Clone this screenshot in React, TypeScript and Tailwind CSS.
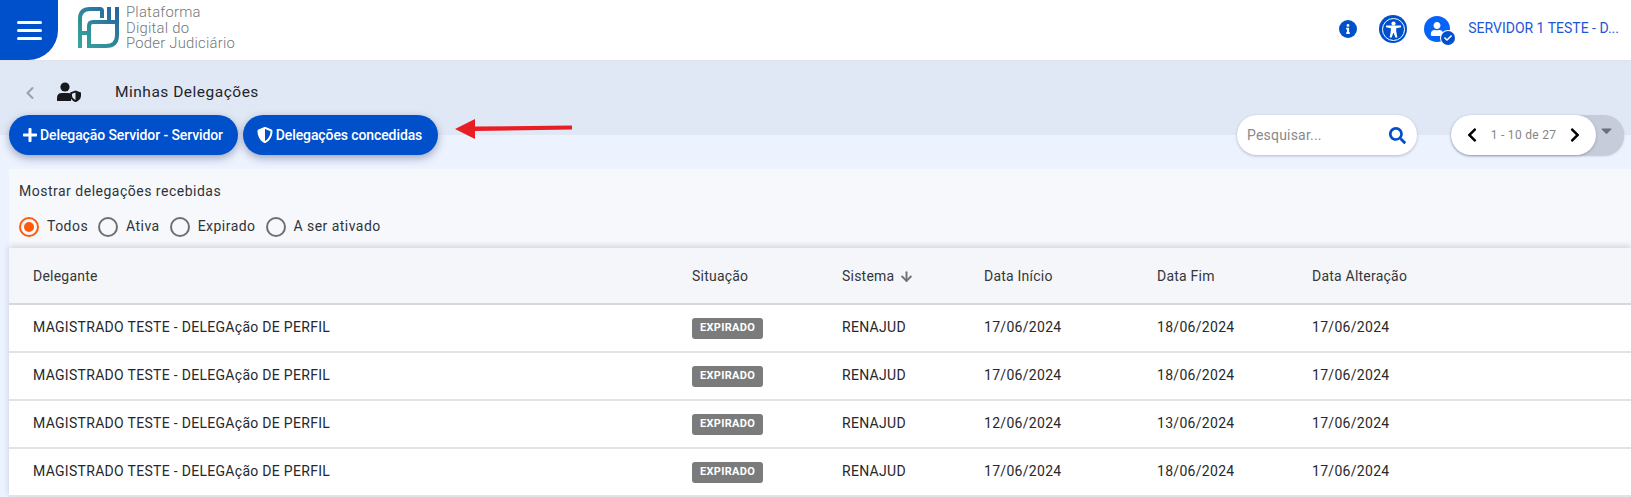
import { ArrowDown, ChevronLeft } from 'lucide-react'
import { FaCaretDown, FaCheck, FaChevronLeft, FaChevronRight, FaInfo, FaPlus, FaSearch, FaShieldAlt, FaUser } from 'react-icons/fa'

const rows = [
  { start: '17/06/2024', end: '18/06/2024', changed: '17/06/2024' },
  { start: '17/06/2024', end: '18/06/2024', changed: '17/06/2024' },
  { start: '12/06/2024', end: '13/06/2024', changed: '17/06/2024' },
  { start: '17/06/2024', end: '18/06/2024', changed: '17/06/2024' },
]

function Logo() {
  return (
    <svg width="42" height="42" viewBox="0 0 42 42" fill="none" className="shrink-0">
      <defs>
        <linearGradient id="logo" x1="0" y1="42" x2="42" y2="0" gradientUnits="userSpaceOnUse">
          <stop offset="0" stopColor="#3aa99a" />
          <stop offset="1" stopColor="#24609f" />
        </linearGradient>
      </defs>
      <path
        d="M2 41V12Q2 2 12 2H22Q24 2 24 4V11M39 0V28Q39 39 28 39H11V19Q11 15 15 15H39M31 0V15M2 26H11"
        stroke="url(#logo)"
        strokeWidth="4"
      />
    </svg>
  )
}

function Radio({ label, active }: { label: string; active?: boolean }) {
  return (
    <label className="flex items-center">
      <span
        className={`flex size-5 items-center justify-center rounded-full border-2 ${
          active ? 'border-[#ff5a0a]' : 'border-[#6f6f6f]'
        }`}
      >
        {active && <span className="size-2.5 rounded-full bg-[#ff5a0a]" />}
      </span>
      <span className="ml-2 text-[14px] tracking-[0.46px] text-[#303338]">{label}</span>
    </label>
  )
}

function PillButton({ icon, label, className }: { icon: React.ReactNode; label: string; className: string }) {
  return (
    <button
      className={`flex h-10 items-center justify-center rounded-full bg-[#004fcb] pr-[2px] text-[14px] font-medium tracking-[-0.1px] text-white shadow-[0_3px_8px_rgba(40,50,90,0.4)] ${className}`}
    >
      {icon}
      {label}
    </button>
  )
}

export default function App() {
  return (
    <div className="h-[497px] w-[1631px] overflow-hidden bg-[linear-gradient(#e1e8f5_135px,#ecf2fe_135px)] font-['Roboto',sans-serif]">
      <header className="flex h-[60px] items-start bg-white shadow-[0_1px_0_#dfe3ea]">
        <button className="flex h-[60px] w-[58px] flex-col items-center justify-center gap-[5px] rounded-br-[30px] bg-[#004fcb]">
          <span className="h-[3px] w-[25px] rounded-full bg-white" />
          <span className="h-[3px] w-[25px] rounded-full bg-white" />
          <span className="h-[3px] w-[25px] rounded-full bg-white" />
        </button>
        <div className="ml-[20px] mt-[7px] flex items-start">
          <Logo />
          <div className="-mt-[2px] ml-[6px] text-[14.8px] leading-[15.5px] font-light tracking-[0.25px] text-[#71777c]">
            Plataforma
            <br />
            Digital do
            <br />
            Poder Judiciário
          </div>
        </div>
        <div className="ml-auto flex items-center pt-[15px]">
          <span className="flex size-[18px] items-center justify-center rounded-full bg-[#004fcb] text-white">
            <FaInfo className="size-[10px]" />
          </span>
          <span className="ml-[22px] flex size-[28px] items-center justify-center rounded-full bg-[#004fcb]">
            <span className="flex size-[23px] items-center justify-center rounded-full border-[1.5px] border-white">
              <svg width="17" height="17" viewBox="0 0 17 17" fill="white">
                <circle cx="8.5" cy="2.6" r="2.1" />
                <path d="M1 4.6 16 4.6 16 6.2 11.2 7.2 11.2 10.2 12.4 16.4 10.4 16.4 8.5 11.4 6.6 16.4 4.6 16.4 5.8 10.2 5.8 7.2 1 6.2Z" />
              </svg>
            </span>
          </span>
          <span className="relative ml-[17px] flex size-[26px] items-center justify-center rounded-full bg-[#0563f5] text-white">
            <FaUser className="size-[14px]" />
            <span className="absolute -bottom-[3px] -right-[5px] flex size-[14px] items-center justify-center rounded-full bg-[#004fcb] ring-1 ring-white">
              <FaCheck className="size-[8px]" />
            </span>
          </span>
          <span className="ml-[18px] mr-[12px] -translate-y-[1px] text-[14px] text-[#1d56d6]">SERVIDOR 1 TESTE - D...</span>
        </div>
      </header>

      <div className="flex h-[55px] items-center pt-[5px]">
        <ChevronLeft className="ml-[20px] mt-[6px] size-[20px] text-[#9aa1ac]" strokeWidth={2.5} />
        <svg width="24" height="20" viewBox="0 0 24 20" className="ml-[17px] mt-[4px] shrink-0">
          <circle cx="8" cy="5" r="4.6" fill="#17191c" />
          <path d="M0 19V16Q0 11 5 11H11Q13 11 14 12V19Z" fill="#17191c" />
          <path d="M18.5 8.5 24 10.5V13.5Q24 18 18.5 20.2 13.2 18 13.2 13.5V10.5Z" fill="#17191c" />
          <path d="M18.5 10.5V18Q15 16.5 15 13.3V11.7Z" fill="#e1e8f5" />
        </svg>
        <h1 className="ml-[34px] mt-[6px] text-[15.5px] tracking-[0.5px] text-[#22252a]">Minhas Delegações</h1>
      </div>

      <div className="relative flex h-10 items-center">
        <PillButton icon={<FaPlus className="mr-[2px] size-[16px]" />} label="Delegação Servidor - Servidor" className="ml-[9px] w-[229px]" />
        <PillButton icon={<FaShieldAlt className="mr-[3px] size-[16px]" />} label="Delegações concedidas" className="ml-[5px] w-[195px]" />
        <svg width="120" height="22" viewBox="0 0 120 22" className="absolute left-[455px] top-[4px]">
          <path d="M0 10 20 0V7.5L117 6.5V10.5L20 12V20Z" fill="#e81e25" />
        </svg>

        <div className="ml-auto flex h-10 w-[180px] items-center justify-between rounded-full bg-white pl-[10px] pr-[11px] shadow-[0_1px_3px_rgba(40,50,90,0.3)]">
          <span className="text-[14px] tracking-[0.2px] text-[#8a8a8a]">Pesquisar...</span>
          <FaSearch className="size-[17px] text-[#004fcb]" />
        </div>
        <div className="relative ml-[34px] mr-[7px] h-10 w-[173px] rounded-full bg-[#c7ccda] shadow-[0_1px_2px_rgba(40,50,90,0.25)]">
          <FaCaretDown className="absolute right-[9px] top-[7px] size-[17px] text-[#6b7078]" />
          <div className="flex h-10 w-[145px] items-center justify-between rounded-full bg-white px-[13px] shadow-[0_1px_3px_rgba(40,50,90,0.3)]">
            <FaChevronLeft className="size-[16px] text-black" />
            <span className="text-[12px] tracking-[0.3px] text-[#858585]">1 - 10 de 27</span>
            <FaChevronRight className="size-[16px] text-black" />
          </div>
        </div>
      </div>

      <main className="ml-[9px] mt-[14px] bg-[#f6f8fc]">
        <div className="h-[79px] pl-[10px] pt-[13px]">
          <p className="text-[14px] leading-[18px] tracking-[0.5px] text-[#303338]">Mostrar delegações recebidas</p>
          <div className="mt-[16px] flex gap-[10px]">
            <Radio label="Todos" active />
            <Radio label="Ativa" />
            <Radio label="Expirado" />
            <Radio label="A ser ativado" />
          </div>
        </div>

        <div className="bg-white shadow-[0_-2px_6px_rgba(40,50,90,0.18)]">
          <div className="grid h-[57px] grid-cols-[659px_150px_142px_173px_155px_1fr] items-center border-b-2 border-[#d5d8df] bg-[#f5f6fa] pl-[24px] pt-[2px] text-[14px] tracking-[0.22px] text-[#33363b]">
            <span>Delegante</span>
            <span>Situação</span>
            <span className="flex items-center">
              Sistema <ArrowDown className="ml-[5px] size-[15px] text-[#6d7178]" strokeWidth={3} />
            </span>
            <span>Data Início</span>
            <span>Data Fim</span>
            <span>Data Alteração</span>
          </div>
          {rows.map((row, i) => (
            <div
              key={i}
              className="grid h-[48px] grid-cols-[659px_150px_142px_173px_155px_1fr] items-center border-b-2 border-[#e3e3e5] pl-[24px] text-[14px] tracking-[0.3px] text-[#26282c]"
            >
              <span className="-translate-y-[1px]">MAGISTRADO TESTE - DELEGAção DE PERFIL</span>
              <span>
                <span className="flex h-[21px] w-[71px] items-center justify-center rounded-[3px] bg-[#7b7b7b] text-[11px] font-bold text-white">
                  EXPIRADO
                </span>
              </span>
              <span className="-translate-y-[1px]">RENAJUD</span>
              <span className="-translate-y-[1px]">{row.start}</span>
              <span className="-translate-y-[1px]">{row.end}</span>
              <span className="-translate-y-[1px]">{row.changed}</span>
            </div>
          ))}
        </div>
      </main>
    </div>
  )
}
